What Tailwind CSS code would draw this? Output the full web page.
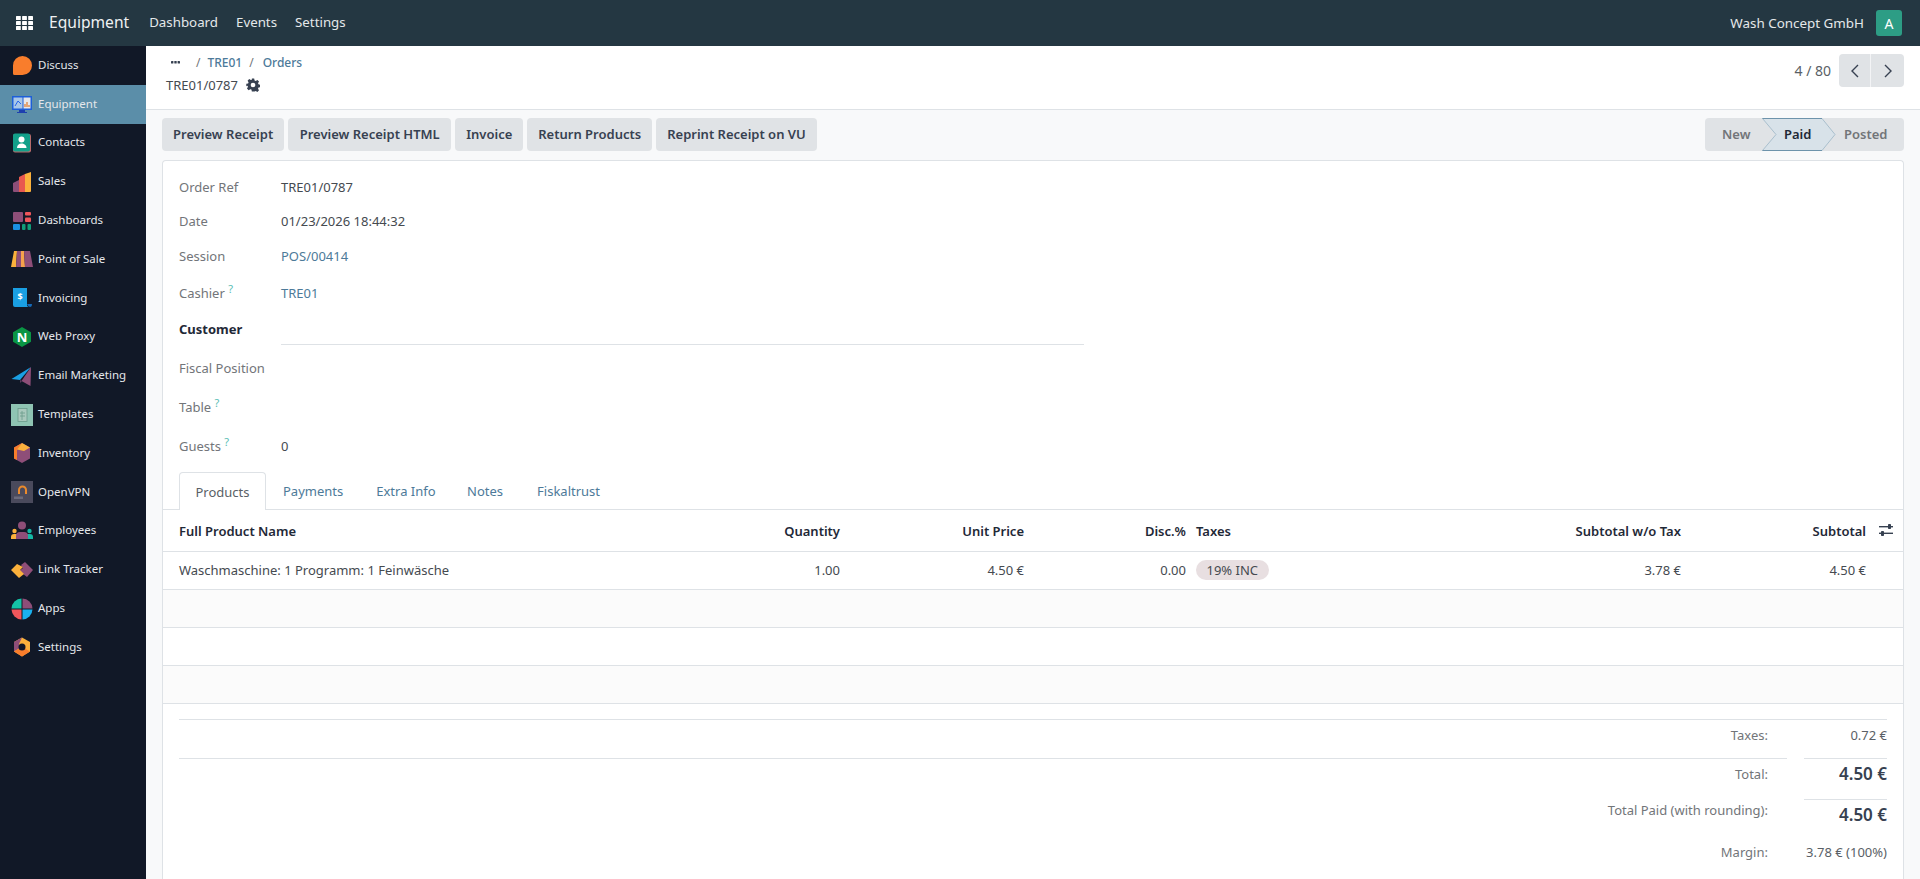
<!DOCTYPE html>
<html lang="en">
<head>
<meta charset="UTF-8" />
<title>Equipment</title>
<script src="https://cdn.jsdelivr.net/npm/@tailwindcss/browser@4"></script>
</head>
<body class="h-[879px] overflow-hidden bg-white font-['Noto_Sans',sans-serif] text-[13px] text-[#454a50]">

<!-- Top bar -->
<header class="flex h-[46px] items-center bg-[#243742] text-white">
  <svg class="ml-4 h-[14px] w-[17px]" viewBox="0 0 17 14" fill="#fff"><rect width="4.800" height="4" rx=".5"/><rect x="6.100" width="4.800" height="4" rx=".5"/><rect x="12.200" width="4.800" height="4" rx=".5"/><rect y="5" width="4.800" height="4" rx=".5"/><rect x="6.100" y="5" width="4.800" height="4" rx=".5"/><rect x="12.200" y="5" width="4.800" height="4" rx=".5"/><rect y="10" width="4.800" height="4" rx=".5"/><rect x="6.100" y="10" width="4.800" height="4" rx=".5"/><rect x="12.200" y="10" width="4.800" height="4" rx=".5"/></svg>
  <span class="ml-4 text-[15.6px] text-[#eef1f3]">Equipment</span>
  <nav class="ml-5 flex gap-[18px] text-[13.3px] text-[#e4e8ea]">
    <span>Dashboard</span><span>Events</span><span>Settings</span>
  </nav>
  <span class="ml-auto text-[13.4px] text-[#e4e8ea]">Wash Concept GmbH</span>
  <span class="ml-3 mr-[18px] flex h-[26px] w-[26px] items-center justify-center rounded-[3px] bg-[#2d9d85] text-[14px]">A</span>
</header>

<div class="flex h-[833px]">
  <!-- Sidebar -->
  <aside class="w-[146px] shrink-0 bg-[#111827] text-[11.5px] text-[#e5e7eb]">
    <a class="flex h-[38.8px] items-center gap-[5px] pb-[2px] pl-[11px]"><svg class="mt-[2px] h-[22px] w-[22px]" viewBox="0 0 22 22"><path d="M2 11.500a9.500 9.500 0 1 1 9.500 9.500H3.500Q2 21 2 19.500z" fill="#f97d2c"/></svg>Discuss</a>
    <a class="flex h-[38.8px] items-center gap-[5px] bg-[#5b8ea9] pb-[2px] pl-[11px]"><svg class="mt-[2px] h-[22px] w-[22px]" viewBox="0 0 22 22"><rect x="1" y="3" width="20" height="14" fill="#1d5fd8"/><rect x="2.500" y="4.500" width="9" height="11" fill="#a9c7e8"/><rect x="12.500" y="4.500" width="7" height="11" fill="#e5e7eb"/><path d="M4 13l3-5 3 3" stroke="#2563eb" fill="none"/><path d="M14 14v-3M16 14v-5M18 14v-2" stroke="#e07a2c" stroke-width="1.200" fill="none"/><path d="M8 17h6v2h2v1H6v-1h2z" fill="#1e40af"/></svg>Equipment</a>
    <a class="flex h-[38.8px] items-center gap-[5px] pb-[2px] pl-[11px]"><svg class="mt-[2px] h-[22px] w-[22px]" viewBox="0 0 22 22"><rect x="2" y="2" width="18" height="18.500" rx="2" fill="#b86b6b"/><rect x="2" y="1.500" width="17" height="18" rx="2" fill="#12a08a"/><circle cx="10.500" cy="7.500" r="3" fill="#fff"/><path d="M6 16c0-3 2-4.500 4.500-4.500s5 1.500 5 4.500z" fill="#fff"/></svg>Contacts</a>
    <a class="flex h-[38.8px] items-center gap-[5px] pb-[2px] pl-[11px]"><svg class="mt-[2px] h-[22px] w-[22px]" viewBox="0 0 22 22"><path d="M2 12l6-3v12H3a1 1 0 0 1-1-1z" fill="#8e4e78"/><path d="M8 6l6-3v18H8z" fill="#e8584f"/><path d="M14 3l6-2v19a1 1 0 0 1-1 1h-5z" fill="#fbb13c"/></svg>Sales</a>
    <a class="flex h-[38.8px] items-center gap-[5px] pb-[2px] pl-[11px]"><svg class="mt-[2px] h-[22px] w-[22px]" viewBox="0 0 22 22"><rect x="2" y="2" width="10" height="10" rx="1" fill="#8e4e78"/><rect x="14" y="2" width="6" height="3.500" rx="1" fill="#f0565b"/><rect x="14" y="7.500" width="6" height="4.500" rx="1" fill="#f0565b"/><rect x="2" y="14" width="7" height="6" rx="1" fill="#1a8fe3"/><rect x="11" y="14" width="3.500" height="6" rx="1" fill="#0f9d7a"/><rect x="16.500" y="14" width="3.500" height="6" rx="1" fill="#0f9d7a"/></svg>Dashboards</a>
    <a class="flex h-[38.8px] items-center gap-[5px] pb-[2px] pl-[11px]"><svg class="mt-[2px] h-[22px] w-[22px]" viewBox="0 0 22 22"><path d="M3 3h3L5 19H0z" fill="#fbb13c"/><path d="M6 3h4v16H5z" fill="#8e4e78"/><path d="M10 3h3l1 16h-4z" fill="#f6a24c"/><path d="M13 3h6l3 16h-8z" fill="#8e4e78"/></svg>Point of Sale</a>
    <a class="flex h-[38.8px] items-center gap-[5px] pb-[2px] pl-[11px]"><svg class="mt-[2px] h-[22px] w-[22px]" viewBox="0 0 22 22"><path d="M2 1h14v17q0 2 3 2H4q-2 0-2-2z" fill="#1a9fe3"/><path d="M16 17h5q0 3-2 3t-3-3z" fill="#1469b8"/><text x="9" y="13" font-size="9" font-weight="700" fill="#fff" text-anchor="middle">$</text></svg>Invoicing</a>
    <a class="flex h-[38.8px] items-center gap-[5px] pb-[2px] pl-[11px]"><svg class="mt-[2px] h-[22px] w-[22px]" viewBox="0 0 22 22"><path d="M11 1l9 5.200v9.600L11 21l-9-5.200V6.200z" fill="#0a9544"/><text x="11" y="15.500" font-size="13" font-weight="700" fill="#fff" text-anchor="middle">N</text></svg>Web Proxy</a>
    <a class="flex h-[38.8px] items-center gap-[5px] pb-[2px] pl-[11px]"><svg class="mt-[2px] h-[22px] w-[22px]" viewBox="0 0 22 22"><path d="M.5 14L20 2 9 15z" fill="#1a9fe3"/><path d="M20 2l-.5 19-9-5z" fill="#8e4e78"/><path d="M9 15l2 1-2 2z" fill="#5b3a5e"/></svg>Email Marketing</a>
    <a class="flex h-[38.8px] items-center gap-[5px] pb-[2px] pl-[11px]"><svg class="mt-[2px] h-[22px] w-[22px]" viewBox="0 0 22 22"><rect width="22" height="22" fill="#8fc4b3"/><rect x="7" y="4.500" width="9" height="13" fill="#a9c9bd" stroke="#6a9c8c" stroke-width=".8"/><path d="M11 7v9M9 9h5M9 12h5" stroke="#6a9c8c" stroke-width=".8"/></svg>Templates</a>
    <a class="flex h-[38.8px] items-center gap-[5px] pb-[2px] pl-[11px]"><svg class="mt-[2px] h-[22px] w-[22px]" viewBox="0 0 22 22"><path d="M11 1l8 4.600v10.800L11 21l-8-4.600V5.600z" fill="#8e4e78"/><path d="M11 1L3 5.600v10.800L6 18V8z" fill="#f97d2c"/><path d="M11 1l8 4.600L13 9 6 7.500z" fill="#fbb13c"/></svg>Inventory</a>
    <a class="flex h-[38.8px] items-center gap-[5px] pb-[2px] pl-[11px]"><svg class="mt-[2px] h-[22px] w-[22px]" viewBox="0 0 22 22"><rect width="22" height="22" fill="#4a4a5c"/><path d="M8 13V9a3.500 3.500 0 0 1 7 0v4" fill="none" stroke="#ea8a2c" stroke-width="2"/><rect x="3" y="15.500" width="9" height="2.500" fill="#6b6b7c"/></svg>OpenVPN</a>
    <a class="flex h-[38.8px] items-center gap-[5px] pb-[2px] pl-[11px]"><svg class="mt-[2px] h-[22px] w-[22px]" viewBox="0 0 22 22"><circle cx="11" cy="5.500" r="4" fill="#8e4e78"/><circle cx="3.500" cy="11" r="2.200" fill="#fbb13c"/><circle cx="18.500" cy="11" r="2.200" fill="#14b8a6"/><path d="M0 19v-2a3 3 0 0 1 3-3h3v5z" fill="#fbb13c"/><path d="M22 19v-2a3 3 0 0 0-3-3h-3v5z" fill="#14b8a6"/><path d="M5 19v-3a4 4 0 0 1 4-4h4a4 4 0 0 1 4 4v3z" fill="#8e4e78"/></svg>Employees</a>
    <a class="flex h-[38.8px] items-center gap-[5px] pb-[2px] pl-[11px]"><svg class="mt-[2px] h-[22px] w-[22px]" viewBox="0 0 22 22"><path d="M10 6l4-3 8 8-6 7-8-6 4-3z" fill="#8e4e78"/><path d="M0 11l6-6 6 3-3 3 4 4-5 4z" fill="#fbb13c"/></svg>Link Tracker</a>
    <a class="flex h-[38.8px] items-center gap-[5px] pb-[2px] pl-[11px]"><svg class="mt-[2px] h-[22px] w-[22px]" viewBox="0 0 22 22"><path d="M10.500.5A10.500 10.500 0 0 0 .5 10.500h10z" fill="#14c4a6"/><path d="M11.500.5a10.500 10.500 0 0 1 10 10h-10z" fill="#8e4e78"/><path d="M.5 11.500a10.500 10.500 0 0 0 10 10v-10z" fill="#f0565b"/><path d="M11.500 11.500h10a10.500 10.500 0 0 1-10 10z" fill="#1ab0ee"/></svg>Apps</a>
    <a class="flex h-[38.8px] items-center gap-[5px] pb-[2px] pl-[11px]"><svg class="mt-[2px] h-[22px] w-[22px]" viewBox="0 0 22 22"><path d="M11 1.500l8 4.500v9.500l-8 5-8-5V6z" fill="#fbb13c"/><path d="M11 1.500L3 6v9.500l5-3V8z" fill="#8e4e78"/><path d="M3 15.500l8 5 8-5-5-3H8z" fill="#f97d2c"/><circle cx="11" cy="11" r="3.500" fill="#111827"/></svg>Settings</a>
  </aside>

  <!-- Main -->
  <main class="flex min-w-0 flex-1 flex-col bg-[#f8f9fa]">
    <!-- Control panel -->
    <div class="flex h-[64px] shrink-0 items-start justify-between border-b border-[#dee2e6] bg-white pl-[20px] pr-[16px]">
      <div class="pt-[7.500px]">
        <div class="flex items-center text-[12px] font-medium text-[#4d7a99]">
          <svg class="ml-[5px] mr-[16px] h-[3px] w-[9px]" viewBox="0 0 9 3" fill="#374151"><rect width="2.400" height="2.600" rx=".6"/><rect x="3.300" width="2.400" height="2.600" rx=".6"/><rect x="6.600" width="2.400" height="2.600" rx=".6"/></svg>
          <span class="mr-[7px] font-normal text-[#727579]">/</span>TRE01<span class="ml-[7px] mr-[9px] font-normal text-[#727579]">/</span>Orders
        </div>
        <div class="mt-[4px] flex items-center gap-[8px]">TRE01/0787
          <svg class="h-[14px] w-[14px]" viewBox="0 0 24 24" fill="#374151"><path fill-rule="evenodd" d="M10 1h4l.7 3.200 2 .8L19.500 3.300l2.800 2.800-1.700 2.800.8 2 3.100.7v4l-3.100.7-.8 2 1.700 2.800-2.800 2.800-2.800-1.700-2 .8L14 23h-4l-.7-3.100-2-.8-2.800 1.700-2.800-2.800 1.700-2.800-.8-2L.5 14v-4l3.100-.7.8-2-1.700-2.800 2.800-2.800 2.800 1.700 2-.8zM12 8a4 4 0 1 0 0 8 4 4 0 0 0 0-8z"/></svg>
        </div>
      </div>
      <div class="flex items-center gap-2 pt-[8px]">
        <span class="text-[14px] text-[#5a5f66]">4 / 80</span>
        <div class="flex h-[33px] overflow-hidden rounded-[4px] bg-[#e0e3e6]">
          <span class="flex w-[32px] items-center justify-center border-r border-[#f3f4f6]"><svg class="h-[14px] w-[10px]" viewBox="0 0 10 14" fill="none" stroke="#374151" stroke-width="1.400"><path d="M8 1L2 7l6 6"/></svg></span>
          <span class="flex w-[33px] items-center justify-center"><svg class="h-[14px] w-[10px]" viewBox="0 0 10 14" fill="none" stroke="#374151" stroke-width="1.400"><path d="M2 1l6 6-6 6"/></svg></span>
        </div>
      </div>
    </div>

    <!-- Action buttons + status bar -->
    <div class="flex items-center justify-between px-[16px] pt-[8px]">
      <div class="flex gap-[4px] font-semibold text-[#374151]">
        <span class="flex h-[33px] items-center rounded-[4px] bg-[#e0e3e6] px-[11px] pt-[1px]">Preview Receipt</span>
        <span class="flex h-[33px] items-center rounded-[4px] bg-[#e0e3e6] px-[11.500px] pt-[1px]">Preview Receipt HTML</span>
        <span class="flex h-[33px] items-center rounded-[4px] bg-[#e0e3e6] px-[11px] pt-[1px]">Invoice</span>
        <span class="flex h-[33px] items-center rounded-[4px] bg-[#e0e3e6] px-[11px] pt-[1px]">Return Products</span>
        <span class="flex h-[33px] items-center rounded-[4px] bg-[#e0e3e6] px-[11px] pt-[1px]">Reprint Receipt on VU</span>
      </div>
      <div class="relative flex h-[33px] w-[199px] items-center rounded-[4px] bg-[#e0e3e6] pt-[1px] font-semibold">
        <svg class="pointer-events-none absolute left-[57px] top-0 h-[33px] w-[74px]" viewBox="0 0 74 33"><path d="M.5.5H60L73 16.500 60 32.500H.5L14 16.500z" fill="#d8e2e9" stroke="#a9bfcd"/><path d="M.5.5H60M.5 32.500H60" stroke="#6d93ab"/></svg>
        <span class="relative w-[79px] pl-[17px] text-[#727579]">New</span>
        <span class="relative w-[60px] text-[#1f2937]">Paid</span>
        <span class="relative text-[#727579]">Posted</span>
      </div>
    </div>

    <!-- Sheet -->
    <section class="mx-[16px] mt-[9px] min-h-0 flex-1 rounded-t-[4px] border border-b-0 border-[#dee2e6] bg-white">
      <div class="pl-[16px] pt-[17px]">
        <div class="flex h-[34px]"><span class="w-[102px] text-[#727579]">Order Ref</span>TRE01/0787</div>
        <div class="flex h-[34px]"><span class="w-[102px] text-[#727579]">Date</span>01/23/2026 18:44:32</div>
        <div class="flex h-[38px] pt-[1px]"><span class="w-[102px] text-[#727579]">Session</span><span class="text-[#4d7a99]">POS/00414</span></div>
        <div class="flex h-[36px]"><span class="w-[102px] text-[#727579]">Cashier <sup class="text-[11px] text-[#5bbdb5]">?</sup></span><span class="text-[#4d7a99]">TRE01</span></div>
        <div class="flex h-[39px]"><span class="w-[102px] font-bold text-[#1f2937]">Customer</span><span class="h-[25px] w-[803px] border-b border-[#dee2e6]"></span></div>
        <div class="flex h-[38px] text-[#727579]">Fiscal Position</div>
        <div class="h-[39px] pt-[1px] text-[#727579]">Table <sup class="text-[11px] text-[#5bbdb5]">?</sup></div>
        <div class="flex h-[36px] pt-[1px]"><span class="w-[102px] text-[#727579]">Guests <sup class="text-[11px] text-[#5bbdb5]">?</sup></span>0</div>
      </div>

      <!-- Tabs -->
      <div class="flex h-[38px] items-end border-b border-[#dee2e6] pl-[16px]">
        <span class="-mb-px flex h-[38px] w-[87px] items-center justify-center rounded-t-[4px] border border-b-0 border-[#dee2e6] bg-white pt-[2px] text-[#5a5f66]">Products</span>
        <span class="flex h-[37px] items-center pl-[17px] pr-[16px] pt-[2px] text-[#4d7a99]">Payments</span>
        <span class="flex h-[37px] items-center pl-[17px] pr-[14.500px] pt-[2px] text-[#4d7a99]">Extra Info</span>
        <span class="flex h-[37px] items-center px-[17px] pt-[2px] text-[#4d7a99]">Notes</span>
        <span class="flex h-[37px] items-center px-[17px] pt-[2px] text-[#4d7a99]">Fiskaltrust</span>
      </div>

      <!-- Order lines -->
      <table class="w-full table-fixed border-collapse">
        <colgroup><col class="w-[530px]"><col class="w-[147px]"><col class="w-[184px]"><col class="w-[162px]"><col class="w-[300px]"><col class="w-[195px]"><col class="w-[185px]"><col></colgroup>
        <thead>
          <tr class="h-[41px] border-b border-[#dee2e6] text-[#1f2937]">
            <th class="pl-[16px] pt-[2px] text-left font-semibold">Full Product Name</th>
            <th class="pt-[2px] text-right font-semibold">Quantity</th>
            <th class="pt-[2px] text-right font-semibold">Unit Price</th>
            <th class="pt-[2px] text-right font-semibold">Disc.%</th>
            <th class="pl-[10px] pt-[2px] text-left font-semibold">Taxes</th>
            <th class="pt-[2px] text-right font-semibold">Subtotal w/o Tax</th>
            <th class="pt-[2px] text-right font-semibold">Subtotal</th>
            <th class="pl-[13px]"><svg class="h-[12px] w-[14px]" viewBox="0 0 14 12" fill="#374151"><rect y="2" width="14" height="1.400"/><rect x="9" width="3" height="5" rx=".8"/><rect y="8.600" width="14" height="1.400"/><rect x="2" y="7" width="3" height="5" rx=".8"/></svg></th>
          </tr>
        </thead>
        <tbody>
          <tr class="h-[38px] border-b border-[#dee2e6]">
            <td class="pl-[16px] pt-[1px]">Waschmaschine: 1 Programm: 1 Feinwäsche</td>
            <td class="pt-[1px] text-right">1.00</td>
            <td class="pt-[1px] text-right">4.50 €</td>
            <td class="pt-[1px] text-right">0.00</td>
            <td class="pl-[10px]"><span class="inline-block rounded-full bg-[#e8dfe1] px-[10.500px] leading-[20px]">19% INC</span></td>
            <td class="pt-[1px] text-right">3.78 €</td>
            <td class="pt-[1px] text-right">4.50 €</td>
            <td></td>
          </tr>
          <tr class="h-[38px] border-b border-[#dee2e6] bg-[#fbfbfb]"><td colspan="8"></td></tr>
          <tr class="h-[38px] border-b border-[#dee2e6]"><td colspan="8"></td></tr>
          <tr class="h-[38px] border-b border-[#dee2e6] bg-[#fbfbfb]"><td colspan="8"></td></tr>
        </tbody>
      </table>

      <!-- Totals -->
      <div class="mx-[16px] mt-[15px] text-[#727579]">
        <div class="flex h-[39px] items-start border-t border-[#dee2e6] pt-[6px]">
          <span class="ml-auto">Taxes:</span>
          <span class="ml-[36px] w-[83px] text-right text-[#5a5f66]">0.72 €</span>
        </div>
        <div class="flex h-[41px]">
          <div class="flex-1 border-t border-[#dee2e6] pr-[19px] pt-[6px] text-right">Total:</div>
          <span class="ml-[17px] w-[83px] border-t border-[#dee2e6] pt-[2px] text-right text-[17px] font-semibold text-[#374151]">4.50 €</span>
        </div>
        <div class="flex h-[33px]">
          <span class="ml-auto pt-[2px]">Total Paid (with rounding):</span>
          <span class="ml-[36px] w-[83px] border-t border-[#dee2e6] pt-[2px] text-right text-[17px] font-semibold text-[#374151]">4.50 €</span>
        </div>
        <div class="flex items-start pt-[11px]">
          <span class="ml-auto">Margin:</span>
          <span class="ml-[36px] w-[83px] whitespace-nowrap text-right text-[#5a5f66]">3.78 € (100%)</span>
        </div>
      </div>
    </section>
  </main>
</div>
</body>
</html>
